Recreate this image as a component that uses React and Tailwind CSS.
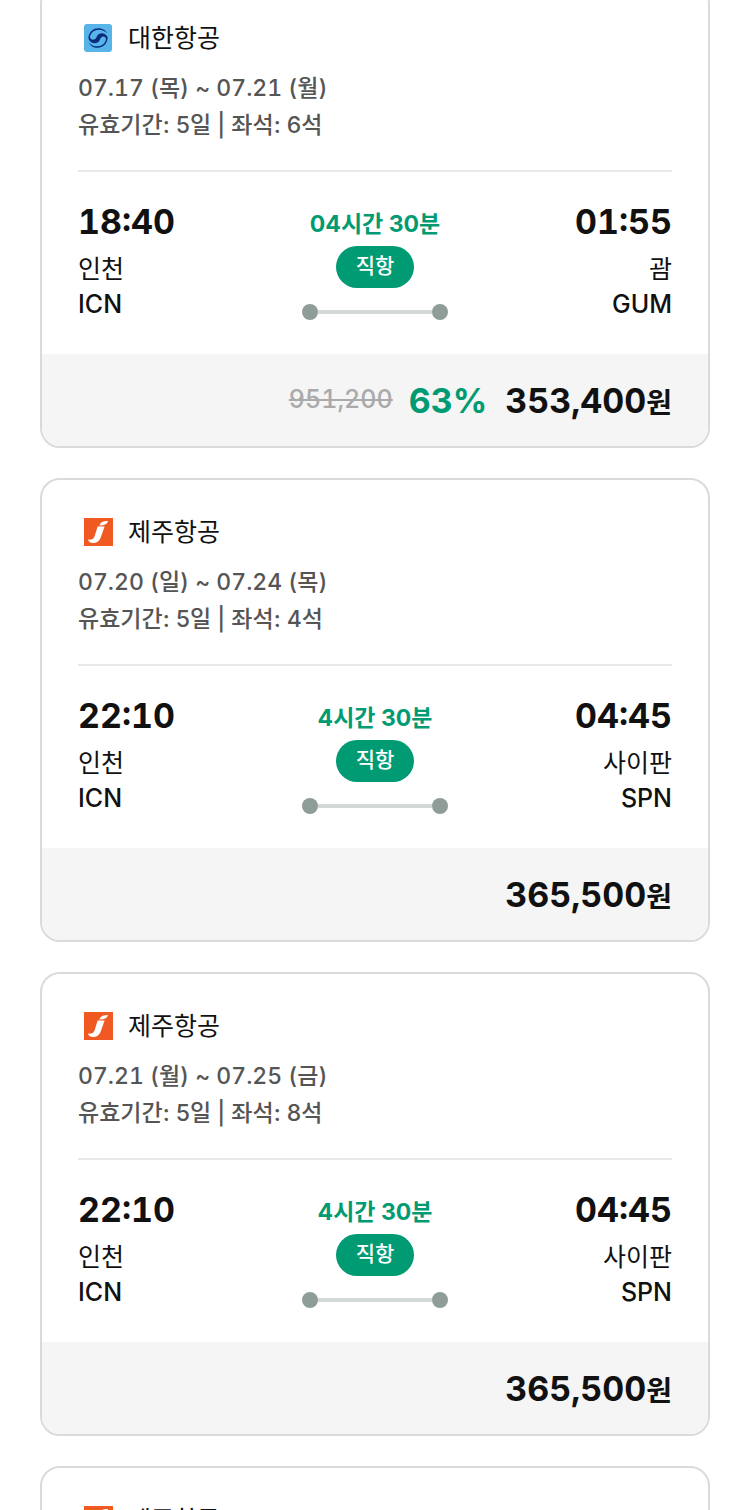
const flights = [
    {
        id: 1,
        airline: '대한항공',
        logo: 'korean',
        period: '07.17 (목) ~ 07.21 (월)',
        info: '유효기간: 5일 | 좌석: 6석',
        duration: '04시간 30분',
        depart: { time: '18:40', city: '인천', code: 'ICN' },
        arrive: { time: '01:55', city: '괌', code: 'GUM' },
        original: '951,200',
        discount: '63%',
        price: '353,400',
    },
    {
        id: 2,
        airline: '제주항공',
        logo: 'jeju',
        period: '07.20 (일) ~ 07.24 (목)',
        info: '유효기간: 5일 | 좌석: 4석',
        duration: '4시간 30분',
        depart: { time: '22:10', city: '인천', code: 'ICN' },
        arrive: { time: '04:45', city: '사이판', code: 'SPN' },
        price: '365,500',
    },
    {
        id: 3,
        airline: '제주항공',
        logo: 'jeju',
        period: '07.21 (월) ~ 07.25 (금)',
        info: '유효기간: 5일 | 좌석: 8석',
        duration: '4시간 30분',
        depart: { time: '22:10', city: '인천', code: 'ICN' },
        arrive: { time: '04:45', city: '사이판', code: 'SPN' },
        price: '365,500',
    },
    {
        id: 4,
        airline: '제주항공',
        logo: 'jeju',
        period: '07.22 (화) ~ 07.26 (토)',
        info: '유효기간: 5일 | 좌석: 9석',
        duration: '4시간 30분',
        depart: { time: '22:10', city: '인천', code: 'ICN' },
        arrive: { time: '04:45', city: '사이판', code: 'SPN' },
        price: '365,500',
    },
];

const KoreanAirLogo = () => (
    <svg viewBox="0 0 28 28" className="w-7 h-7" aria-hidden="true">
        <rect width="28" height="28" rx="3" fill="#56b4e9" />
        <path
            d="M4.4 14.4C4.8 7.4 9.4 4.2 14.4 4.2C18.8 4.2 22 6.6 23.2 9.6C20.8 6.6 17.8 5.6 14.4 5.7C9.8 5.9 6.6 8.8 6 13C6.4 16.6 11.4 16.6 12.6 13C13.8 9 20.6 7 23.7 13.6C23.2 20.6 18.6 23.8 13.6 23.8C9.2 23.8 6 21.4 4.8 18.4C7.2 21.4 10.2 22.4 13.6 22.3C18.2 22.1 21.4 19.2 22 15C21.4 11.8 17.4 11.6 16 15.4C14.2 20.6 7 20.8 4.4 14.4Z"
            fill="#0a2a7d"
        />
    </svg>
);

const JejuAirLogo = () => (
    <svg viewBox="0 0 29 28" className="w-[29px] h-7" aria-hidden="true">
        <rect width="29" height="28" fill="#f05a22" />
        <path d="M15.4 7.6C16.4 4.4 18.6 3 24 3C23.2 6 21 7.4 15.4 7.6Z" fill="#fff" />
        <path
            d="M13.6 8.6H20.6L16.8 19.2C15.4 23.2 12.6 25 9 25C6.6 25 4.8 24.2 4 21.6C7.4 22 9.8 21 10.6 18.2Z"
            fill="#fff"
        />
    </svg>
);

const Endpoint = ({ time, city, code, className }) => (
    <div className={`flex-1 text-[#111] ${className}`}>
        <p className="text-[34px] leading-9 font-bold tabular-nums">{time}</p>
        <p className="mt-3 text-[25px] leading-[34px] font-normal">{city}</p>
        <p className="text-[25px] leading-9 font-medium">{code}</p>
    </div>
);

const FlightCard = ({ flight }) => (
    <article className="overflow-hidden rounded-[20px] border-2 border-[#d9dbdb] bg-white">
        <div className="px-9">
            {/* Airline & schedule */}
            <div className="pt-8 pb-[26px] border-b-2 border-[#e8e8e8]">
                <div className="flex items-center gap-4 h-10 pl-[6px]">
                    <div className="w-7">{flight.logo === 'korean' ? <KoreanAirLogo /> : <JejuAirLogo />}</div>
                    <h2 className="text-[25px] leading-10 font-normal text-[#111]">{flight.airline}</h2>
                </div>
                <div className="mt-3 text-[23px] leading-[37px] text-[#555] font-medium">
                    <p className="tabular-nums">{flight.period}</p>
                    <p>{flight.info}</p>
                </div>
            </div>

            {/* Route */}
            <div className="flex pt-8 pb-8">
                <Endpoint {...flight.depart} className="text-left" />
                <div className="flex flex-col items-center w-[146px]">
                    <p className="text-[23px] leading-10 mb-[2px] font-bold text-[#009b72] whitespace-nowrap">{flight.duration}</p>
                    <span className="h-[42px] px-5 rounded-full bg-[#009b72] text-white text-[21px] leading-10 font-medium">직항</span>
                    <div className="mt-4 flex items-center w-full">
                        <span className="w-4 h-4 rounded-full bg-[#8f9d99]" />
                        <span className="flex-1 h-1 bg-[#d4d8d7]" />
                        <span className="w-4 h-4 rounded-full bg-[#8f9d99]" />
                    </div>
                </div>
                <Endpoint {...flight.arrive} className="text-right" />
            </div>
        </div>

        {/* Price */}
        <div className="flex items-center justify-end h-[92px] px-9 bg-[#f5f5f5] tabular-nums">
            {flight.original && <del className="mr-4 text-[25px] font-medium text-[#aaa]">{flight.original}</del>}
            {flight.discount && <span className="mr-[18px] text-[34px] font-bold text-[#009b72]">{flight.discount}</span>}
            <strong className="text-[34px] font-bold text-[#111]">
                {flight.price}
                <span className="text-[28px]">원</span>
            </strong>
        </div>
    </article>
);

const App = () => {
    return (
        <div className="h-screen overflow-x-hidden overflow-y-auto [scrollbar-width:none] bg-white font-['Inter','Noto_Sans_CJK_KR',sans-serif]">
            <main className="-mt-4 px-10 flex flex-col gap-[30px]">
                {flights.map((flight) => (
                    <FlightCard key={flight.id} flight={flight} />
                ))}
            </main>
        </div>
    );
};

export default App;
